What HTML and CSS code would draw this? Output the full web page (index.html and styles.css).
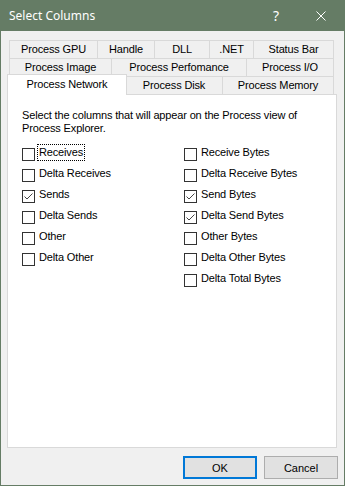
FILE: index.html
```html
<!DOCTYPE html>
<html>
<head>
<meta charset="utf-8">
<link rel="stylesheet" href="styles.css">
</head>
<body>
<div class="window">
  <div class="titlebar">
    <span class="title">Select Columns</span>
    <span class="help">?</span>
    <span class="close"><svg width="10" height="10" viewBox="0 0 10 10"><path d="M0.5 0.5L9.5 9.5M9.5 0.5L0.5 9.5" stroke="#fff" stroke-width="1"/></svg></span>
  </div>
  <div class="content">
    <div class="tabs">
      <div class="tabrow">
        <div class="tab t-gpu">Process GPU</div>
        <div class="tab t-handle">Handle</div>
        <div class="tab t-dll">DLL</div>
        <div class="tab t-net">.NET</div>
        <div class="tab t-status">Status Bar</div>
      </div>
      <div class="tabrow">
        <div class="tab t-image">Process Image</div>
        <div class="tab t-perf">Process Perfomance</div>
        <div class="tab t-io">Process I/O</div>
      </div>
      <div class="tabrow">
        <div class="tab sel t-network">Process Network</div>
        <div class="tab t-disk">Process Disk</div>
        <div class="tab t-memory">Process Memory</div>
      </div>
    </div>
    <div class="panel">
      <p class="intro">Select the columns that will appear on the Process view of Process Explorer.</p>
      <div class="checks">
        <div class="col">
          <div class="item"><span class="box"></span><span class="label focus">Receives</span></div>
          <div class="item"><span class="box"></span><span class="label">Delta Receives</span></div>
          <div class="item"><span class="box checked"><svg width="11" height="11" viewBox="0 0 11 11"><path d="M1.5 5.5L4 8L9.5 2.5" fill="none" stroke="#444" stroke-width="1"/></svg></span><span class="label">Sends</span></div>
          <div class="item"><span class="box"></span><span class="label">Delta Sends</span></div>
          <div class="item"><span class="box"></span><span class="label">Other</span></div>
          <div class="item"><span class="box"></span><span class="label">Delta Other</span></div>
        </div>
        <div class="col">
          <div class="item"><span class="box"></span><span class="label">Receive Bytes</span></div>
          <div class="item"><span class="box"></span><span class="label">Delta Receive Bytes</span></div>
          <div class="item"><span class="box checked"><svg width="11" height="11" viewBox="0 0 11 11"><path d="M1.5 5.5L4 8L9.5 2.5" fill="none" stroke="#444" stroke-width="1"/></svg></span><span class="label">Send Bytes</span></div>
          <div class="item"><span class="box checked"><svg width="11" height="11" viewBox="0 0 11 11"><path d="M1.5 5.5L4 8L9.5 2.5" fill="none" stroke="#444" stroke-width="1"/></svg></span><span class="label">Delta Send Bytes</span></div>
          <div class="item"><span class="box"></span><span class="label">Other Bytes</span></div>
          <div class="item"><span class="box"></span><span class="label">Delta Other Bytes</span></div>
          <div class="item"><span class="box"></span><span class="label">Delta Total Bytes</span></div>
        </div>
      </div>
    </div>
    <div class="buttons">
      <button class="btn default">OK</button>
      <button class="btn">Cancel</button>
    </div>
  </div>
</div>
</body>
</html>
```

FILE: styles.css
```css
* { box-sizing: border-box; }
html, body { margin: 0; padding: 0; background: #f0f0f0; }
body { width: 345px; height: 486px; overflow: hidden; }

.window {
  width: 345px;
  height: 486px;
  background: #f0f0f0;
  border: 1px solid #657c65;
  border-top: none;
  display: flex;
  flex-direction: column;
}

.titlebar {
  height: 31px;
  margin: 0 -1px;
  background: #657c65;
  color: #fff;
  display: flex;
  align-items: center;
  font-family: "Noto Sans", "Open Sans", sans-serif;
  font-size: 12px;
  flex-shrink: 0;
}
.title { margin-left: 9px; flex: 1; }
.help { width: 10px; margin-right: 33px; font-size: 14px; }
.close { width: 10px; height: 10px; margin-right: 19px; display: flex; }
.close svg { display: block; }

.content {
  flex: 1;
  display: flex;
  flex-direction: column;
  padding-top: 9px;
  font-family: "Liberation Sans", Arial, sans-serif;
  font-size: 11px;
  letter-spacing: -0.15px;
  color: #000;
}

.tabs { margin-left: 8px; width: 325px; }
.tabrow { display: flex; height: 18px; align-items: flex-start; }
.tab {
  height: 18px;
  flex-shrink: 0;
  border-top: 1px solid #d9d9d9;
  border-left: 1px solid #d9d9d9;
  background: #f0f0f0;
  display: flex;
  align-items: center;
  justify-content: center;
  line-height: 13px;
  white-space: nowrap;
  padding-bottom: 1px;
}
.tab:last-child { border-right: 1px solid #d9d9d9; }
.tab.sel {
  position: relative;
  z-index: 2;
  background: #fff;
  height: 21px;
  margin: -2px -2px 0 -2px;
  border-right: 1px solid #d9d9d9;
  padding-bottom: 2px;
}

.t-gpu { width: 88px; }
.t-handle { width: 57px; }
.t-dll { width: 55px; }
.t-net { width: 44px; }
.t-status { width: 81px; }
.t-image { width: 102px; }
.t-perf { width: 135px; }
.t-io { width: 88px; }
.t-network { width: 120px; }
.t-disk { width: 97px; }
.t-memory { width: 112px; }

.panel {
  margin-left: 6px;
  width: 330px;
  height: 354px;
  background: #fff;
  border: 1px solid #d9d9d9;
  position: relative;
  z-index: 1;
  padding: 14px 0 0 14px;
  flex-shrink: 0;
}
.intro {
  margin: 0;
  width: 300px;
  line-height: 13px;
}
.checks { display: flex; margin-top: 13px; }
.col { width: 162px; flex-shrink: 0; display: flex; flex-direction: column; }
.item { height: 21px; display: flex; align-items: flex-start; }
.box {
  width: 13px;
  height: 13px;
  border: 1px solid #333;
  background: #fff;
  flex-shrink: 0;
  display: flex;
  align-items: center;
  justify-content: center;
}
.box svg { display: block; }
.label {
  margin-left: 2px;
  margin-top: -4px;
  padding: 1px;
  border: 1px solid transparent;
  line-height: 13px;
  white-space: nowrap;
}
.label.focus { border: 1px dotted #000; }

.buttons {
  display: flex;
  justify-content: flex-end;
  gap: 7px;
  margin-top: 8px;
  padding-right: 6px;
}
.btn {
  width: 74px;
  height: 23px;
  background: #e1e1e1;
  border: 1px solid #adadad;
  font-family: "Liberation Sans", Arial, sans-serif;
  font-size: 11px;
  color: #000;
  padding: 0;
  margin: 0;
}
.btn.default { border: 2px solid #0078d7; }
```
